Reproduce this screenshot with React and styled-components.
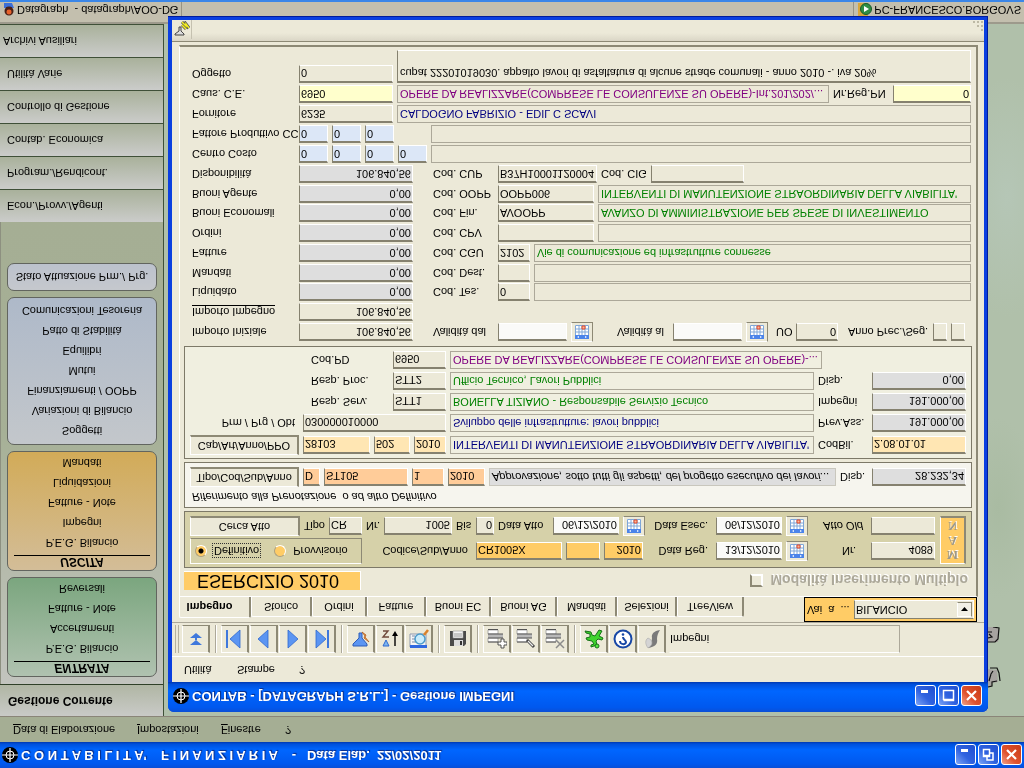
import React from "react";
import styled, { createGlobalStyle, css } from "styled-components";

const GlobalStyle = createGlobalStyle`
  * {
    box-sizing: border-box;
  }
  body {
    margin: 0;
    background: #b1c0aa;
  }
  body, button, input, select, textarea {
    font-family: "Liberation Sans", Arial, sans-serif;
    font-size: 11px;
    line-height: 13px;
    color: #000;
  }
`;

const sideMenus = [
  {
    title: "ENTRATA",
    tone: "green",
    items: ["P.E.G. Bilancio", "Accertamenti", "Fatture - Note", "Reversali"],
  },
  {
    title: "USCITA",
    tone: "orange",
    items: ["P.E.G. Bilancio", "Impegni", "Fatture - Note", "Liquidazioni", "Mandati"],
  },
  {
    tone: "blue",
    items: [
      "Soggetti",
      "Variazioni di Bilancio",
      "Finanziamenti / OOPP",
      "Mutui",
      "Equilibri",
      "Patto di Stabilità",
      "Comunicazioni Tesoreria",
    ],
  },
  { tone: "silver", items: ["Stato Attuazione Prm./ Prg."] },
];

const sideSections = [
  "Econ./Provv./Agenti",
  "Program./Rendicont.",
  "Contab. Economica",
  "Controllo di Gestione",
  "Utilità Varie",
  "Archivi Ausiliari",
];

const tabs = [
  ["Impegno", 72],
  ["Storico", 61],
  ["Ordini", 55],
  ["Fatture", 59],
  ["Buoni EC", 65],
  ["Buoni AG", 66],
  ["Mandati", 60],
  ["Selezioni", 60],
  ["TreeView", 67],
];

export default function App() {
  return (
    <Screen>
      <GlobalStyle />
      <TitleBar>
        <Crosshair />
        <AppTitle>
          {"C O N T A B I L I T A'    F I N A N Z I A R I A    -   Data Elab.  22/02/2011"}
        </AppTitle>
        <WindowButtons restore />
      </TitleBar>
      <MainMenu>
        <MenuItem $w={124}><u>D</u>ata di Elaborazione</MenuItem>
        <MenuItem $w={84}><u>I</u>mpostazioni</MenuItem>
        <MenuItem $w={64}><u>F</u>inestre</MenuItem>
        <MenuItem $w={20}>?</MenuItem>
      </MainMenu>
      <Workspace>
        <Sidebar>
          <SideHeader>Gestione Corrente</SideHeader>
          <SideBody>
            {sideMenus.map((menu) => (
              <SideBox key={menu.tone} $tone={menu.tone} $titled={!!menu.title}>
                {menu.title && <SideTitle>{menu.title}</SideTitle>}
                {menu.items.map((item) => (
                  <SideLink href="#" key={item}>{item}</SideLink>
                ))}
              </SideBox>
            ))}
          </SideBody>
          {sideSections.map((name, i) => (
            <SideSection key={name} $last={i === sideSections.length - 1}>{name}</SideSection>
          ))}
        </Sidebar>
        <Wallpaper>
          <WallpaperLetters />
        </Wallpaper>
      </Workspace>
      <StatusBar>
        <StatusCell>
          <UserIcon />
          {"Datagraph  - datagraph/AOO-DG"}
        </StatusCell>
        <StatusCell $right>
          <ServerIcon />
          PC-FRANCESCO.BORGOVS
        </StatusCell>
      </StatusBar>
      <ImpegniWindow />
    </Screen>
  );
}

function ImpegniWindow() {
  return (
    <Window>
      <WindowTitle>
        <Crosshair />
        <AppTitle>CONTAB - [DATAGRAPH S.R.L.] - Gestione IMPEGNI</AppTitle>
        <WindowButtons />
      </WindowTitle>
      <WindowBody>
        <WindowMenu>
          <MenuItem $w={53}>Utilità</MenuItem>
          <MenuItem $w={62}>Stampe</MenuItem>
          <MenuItem $w={20}>?</MenuItem>
        </WindowMenu>
        <Toolbar />
        <TabStrip>
          {tabs.map(([name, width], i) => (
            <Tab key={name} $w={width} $active={i === 0}>{name}</Tab>
          ))}
          <GoTo>
            <label htmlFor="goto">Vai&nbsp; a&nbsp; ...</label>
            <SelectWrap>
              <GoToSelect id="goto" defaultValue="BILANCIO">
                <option>BILANCIO</option>
              </GoToSelect>
              <SelectArrow viewBox="0 0 13 13">
                <path d="M3 5h7L6.5 9z" fill="#000" />
              </SelectArrow>
            </SelectWrap>
          </GoTo>
        </TabStrip>
        <Page>
          <PageHead>
            <Year>ESERCIZIO 2010</Year>
            <Multiple>
              <CheckBox type="checkbox" disabled />
              Modalità Inserimento Multiplo
            </Multiple>
          </PageHead>
          <ActPanel />
          <BookingPanel />
          <ChapterPanel />
          <Amounts />
        </Page>
        <FootBar>
          <FootButton aria-label="Dati"><FlaskIcon /></FootButton>
          <Grip viewBox="0 0 12 12">
            <path d="M9 1h2v2h-2zM5 5h2v2h-2zM9 5h2v2h-2zM1 9h2v2h-2zM5 9h2v2h-2zM9 9h2v2h-2z" fill="#bdb9a5" />
          </Grip>
        </FootBar>
      </WindowBody>
    </Window>
  );
}

function ActPanel() {
  return (
    <Panel $bg="#d6d1a9">
      <ActGrid>
        <Rows $gap={2}>
          <Row>
            <RadioGroup>
              <RadioLabel $focus>
                <Radio type="radio" name="stato" defaultChecked />
                <span>Definitivo</span>
              </RadioLabel>
              <RadioLabel>
                <Radio type="radio" name="stato" />
                <span>Provvisorio</span>
              </RadioLabel>
            </RadioGroup>
            <Label htmlFor="codice" $w={106} $align="right">Codice/Sub/Anno</Label>
            <Field id="codice" $w={86} $bg="#ffcc66" defaultValue="CR1005X" />
            <Field aria-label="Sub" $w={34} $bg="#ffcc66" />
            <Field aria-label="Anno" $w={39} $bg="#ffcc66" $num defaultValue="2010" />
            <Label htmlFor="dreg" $w={65} $align="right">Data Reg.</Label>
            <Field id="dreg" $w={66} $bg="#fafaf8" $num defaultValue="13/12/2010" />
            <Calendar />
            <Label htmlFor="nr" $w={55} $align="right" $pr={11}>Nr.</Label>
            <Field id="nr" $w={64} $num defaultValue="4089" />
          </Row>
          <Row>
            <PushButton $w={110}>Cerca Atto</PushButton>
            <Label htmlFor="tipo" $w={21}>Tipo</Label>
            <Field id="tipo" $w={33} defaultValue="CR" />
            <Label htmlFor="nratto" $w={14}>Nr.</Label>
            <Field id="nratto" $w={68} $num defaultValue="1005" />
            <Label htmlFor="bis" $w={16}>Bis</Label>
            <Field id="bis" $w={18} $num defaultValue="0" />
            <Label htmlFor="datto" $w={51}>Data Atto</Label>
            <Field id="datto" $w={66} $bg="#fafaf8" $num defaultValue="06/12/2010" />
            <Calendar />
            <Label htmlFor="desec" $w={63} $align="right">Data Esec.</Label>
            <Field id="desec" $w={66} $bg="#fafaf8" $num defaultValue="06/12/2010" />
            <Calendar />
            <Label htmlFor="attoold" $w={55} $align="right" $italic>Atto Old</Label>
            <Field id="attoold" $w={64} />
          </Row>
        </Rows>
        <ManButton disabled>
          <span>M</span>
          <span>A</span>
          <span>N</span>
        </ManButton>
      </ActGrid>
    </Panel>
  );
}

function BookingPanel() {
  return (
    <Panel $bg="#f6f5ee">
      <Note>Riferimento alla Prenotazione&nbsp; o ad altro Definitivo</Note>
      <Row>
        <PushButton $w={109}>Tipo/Cod/Sub/Anno</PushButton>
        <Field aria-label="Tipo" $w={17} $bg="#ffcc99" defaultValue="D" />
        <Field aria-label="Codice" $w={84} $bg="#ffcc99" defaultValue="ST105" />
        <Field aria-label="Sub" $w={32} $bg="#ffcc99" defaultValue="1" />
        <Field aria-label="Anno" $w={37} $bg="#ffcc99" defaultValue="2010" />
        <Descr $bg="#dedede" $italic $soft>
          Approvazione, sotto tutti gli aspetti, del progetto esecutivo dei lavori...
        </Descr>
        <Label htmlFor="disp1" $w={28}>Disp.</Label>
        <Field id="disp1" $w={94} $bg="#dedede" $num defaultValue="28.232,34" />
      </Row>
    </Panel>
  );
}

function ChapterPanel() {
  return (
    <Panel $bg="#f0efe0">
      <Rows $gap={3}>
        <Row>
          <PushButton $w={109}>Cap/Art/Anno/PPO</PushButton>
          <Field aria-label="Capitolo" $w={67} $bg="#ffe6b3" defaultValue="28103" />
          <Field aria-label="Articolo" $w={36} $bg="#ffe6b3" defaultValue="502" />
          <Field aria-label="Anno" $w={32} $bg="#ffe6b3" defaultValue="2010" />
          <Descr $color="#000080">INTERVENTI DI MANUTENZIONE STRAORDINARIA DELLA VIABILITA'</Descr>
          <Label htmlFor="codbil" $w={50}>CodBil.</Label>
          <Field id="codbil" $w={94} $bg="#ffe6b3" defaultValue="2.08.01.01" />
        </Row>
        <Row>
          <Label htmlFor="prm" $w={109} $align="right">Prm / Prg / Obt</Label>
          <Field id="prm" $w={143} defaultValue="030000010000" />
          <Descr $color="#000080">Sviluppo delle infrastrutture: lavori pubblici</Descr>
          <Label htmlFor="prev" $w={50}>Prev.Ass.</Label>
          <Field id="prev" $w={94} $bg="#dedede" $num defaultValue="191.000,00" />
        </Row>
        <Row>
          <Label htmlFor="serv" $w={199} $pl={121}>Resp. Serv.</Label>
          <Field id="serv" $w={53} defaultValue="STT1" />
          <Descr $color="#008000">BONELLA TIZIANO - Responsabile Servizio Tecnico</Descr>
          <Label htmlFor="imp" $w={50}>Impegni</Label>
          <Field id="imp" $w={94} $bg="#dedede" $num defaultValue="191.000,00" />
        </Row>
        <Row>
          <Label htmlFor="proc" $w={199} $pl={121}>Resp. Proc.</Label>
          <Field id="proc" $w={53} defaultValue="STT2" />
          <Descr $color="#008000">Ufficio Tecnico, Lavori Pubblici</Descr>
          <Label htmlFor="disp2" $w={50}>Disp.</Label>
          <Field id="disp2" $w={94} $bg="#dedede" $num defaultValue="0,00" />
        </Row>
        <Row>
          <Label htmlFor="pd" $w={199} $pl={121}>Cod.PD</Label>
          <Field id="pd" $w={53} defaultValue="6950" />
          <Descr $color="#800080">OPERE DA REALIZZARE(COMPRESE LE CONSULENZE SU OPERE)-...</Descr>
          <Blank $w={140} />
        </Row>
      </Rows>
    </Panel>
  );
}

function Amount({ label, value, plain, underline, children }) {
  const id = "imp-" + label.replace(/\s/g, "");
  return (
    <Row $h={17}>
      <Label htmlFor={id} $w={103}>
        {underline ? <Underlined>{label}</Underlined> : label}
      </Label>
      <Field id={id} $w={114} $bg={plain ? undefined : "#dedede"} $num defaultValue={value} />
      {children}
    </Row>
  );
}

function Code({ label, value, width, descr }) {
  const id = "cod-" + label;
  return (
    <>
      <Label htmlFor={id} $w={77} $pl={16}>{label}</Label>
      <Field id={id} $w={width} defaultValue={value} />
      {descr !== undefined && <Descr $color="#008000">{descr}</Descr>}
    </>
  );
}

function Amounts() {
  return (
    <AmountArea>
      <Rows $gap={3}>
        <Amount label="Importo Iniziale" value="106.840,56" plain>
          <Label htmlFor="valdal" $w={77} $pl={16}>Validità dal</Label>
          <Field id="valdal" $w={69} $bg="#fafaf8" />
          <Calendar />
          <Label htmlFor="valal" $w={72} $pl={20}>Validità al</Label>
          <Field id="valal" $w={69} $bg="#fafaf8" />
          <Calendar />
          <Label htmlFor="uo" $w={20} $pl={4}>UO</Label>
          <Field id="uo" $w={42} $num defaultValue="0" />
          <Label htmlFor="prec" $w={87} $pl={6}>Anno Prec./Seg.</Label>
          <Field id="prec" $w={14} />
          <Field aria-label="Anno seguente" $w={14} />
        </Amount>
        <Amount label="Importo Impegno" value="106.840,56" plain underline />
        <Amount label="Liquidato" value="0,00">
          <Code label="Cod. Tes." value="0" width={32} descr="" />
        </Amount>
      </Rows>
      <Rows $gap={3}>
        <Amount label="Mandati" value="0,00">
          <Code label="Cod. Dest." value="" width={32} descr="" />
        </Amount>
        <Amount label="Fatture" value="0,00">
          <Code
            label="Cod. CGU"
            value="2102"
            width={32}
            descr="Vie di comunicazione ed infrastrutture connesse"
          />
        </Amount>
        <Amount label="Ordini" value="0,00">
          <Code label="Cod. CPV" value="" width={96} descr="" />
        </Amount>
        <Amount label="Buoni Economali" value="0,00">
          <Code
            label="Cod. Fin."
            value="AVOOPP"
            width={96}
            descr="AVANZO DI AMMINISTRAZIONE PER SPESE DI INVESTIMENTO"
          />
        </Amount>
      </Rows>
      <Rows $gap={3}>
        <Amount label="Buoni Agente" value="0,00">
          <Code
            label="Cod. OOPP"
            value="OOPP006"
            width={96}
            descr="INTERVENTI DI MANUTENZIONE STRAORDINARIA DELLA VIABILITA'"
          />
        </Amount>
        <Amount label="Disponibilità" value="106.840,56">
          <Code label="Cod. CUP" value="B37H10001120004" width={99} />
          <Label htmlFor="cig" $w={46}>Cod. CIG</Label>
          <Field id="cig" $w={93} />
        </Amount>
        <Row $h={17}>
          <Label htmlFor="cc0" $w={103}>Centro Costo</Label>
          {[0, 1, 2, 3].map((n) => (
            <Field key={n} id={"cc" + n} aria-label="Centro Costo" $w={29} $bg="#dce7f7" defaultValue="0" />
          ))}
          <Descr />
        </Row>
        <Row $h={17}>
          <Label htmlFor="fp0" $w={103}>Fattore Produttivo CC</Label>
          {[0, 1, 2].map((n) => (
            <Field key={n} id={"fp" + n} aria-label="Fattore Produttivo" $w={29} $bg="#dce7f7" defaultValue="0" />
          ))}
          <Blank $w={29} />
          <Descr />
        </Row>
        <Row $h={17}>
          <Label htmlFor="forn" $w={103}>Fornitore</Label>
          <Field id="forn" $w={94} defaultValue="6235" />
          <Descr $color="#000080">CALDOGNO FABRIZIO - EDIL C SCAVI</Descr>
        </Row>
        <Row $h={17}>
          <Label htmlFor="caus" $w={103}>Caus. C.E.</Label>
          <Field id="caus" $w={94} $bg="#ffffcc" defaultValue="6950" />
          <Descr $color="#800080">
            OPERE DA REALIZZARE(COMPRESE LE CONSULENZE SU OPERE)-Int.201/202/...
          </Descr>
          <Label htmlFor="regpn" $w={56}>Nr.Reg.PN</Label>
          <Field id="regpn" $w={78} $bg="#ffffcc" $num defaultValue="0" />
        </Row>
        <Row $h={33} $top>
          <Label htmlFor="ogg" $w={103}>Oggetto</Label>
          <Field id="ogg" $w={94} defaultValue="0" />
          <Subject
            aria-label="Testo oggetto"
            defaultValue="cupat 22201019030. appalto lavori di asfaltatura di alcune strade comunali - anno 2010 -. iva 20%"
          />
        </Row>
      </Rows>
    </AmountArea>
  );
}

function Toolbar() {
  return (
    <Tools>
      <Handle />
      <ToolGroup>
        <ToolButton aria-label="Espandi">
          <Svg>
            <path d="M10 9L16 4H4zM10 16L16 11H4z" fill="#3f78dc" />
            <path d="M9 9h2v3h-2z" fill="#3f78dc" />
          </Svg>
        </ToolButton>
      </ToolGroup>
      <Separator />
      <ToolGroup>
        <ToolButton aria-label="Primo">
          <Svg><path d="M2 1v18" stroke="#3f78dc" strokeWidth="2" /><path d="M15 1v18L5 10z" fill="#5b95f2" stroke="#2f68cf" strokeWidth=".8" /></Svg>
        </ToolButton>
        <ToolButton aria-label="Precedente">
          <Svg><path d="M14 1v18L4 10z" fill="#5b95f2" stroke="#2f68cf" strokeWidth=".8" /></Svg>
        </ToolButton>
        <ToolButton aria-label="Successivo">
          <Svg><path d="M5 1v18L15 10z" fill="#5b95f2" stroke="#2f68cf" strokeWidth=".8" /></Svg>
        </ToolButton>
        <ToolButton aria-label="Ultimo">
          <Svg><path d="M4 1v18L14 10z" fill="#5b95f2" stroke="#2f68cf" strokeWidth=".8" /><path d="M16 1v18" stroke="#3f78dc" strokeWidth="2" /></Svg>
        </ToolButton>
      </ToolGroup>
      <Separator />
      <ToolGroup>
        <ToolButton aria-label="Filtro">
          <Svg>
            <path d="M2 3h14v2l-5 6v5H8v-5L2 5z" fill="#5b95f2" stroke="#2d5cb8" />
            <path d="M11 17l4-3-1-2 4-5-5 4 1 2z" fill="#f6a845" stroke="#b05a1d" strokeWidth=".8" />
          </Svg>
        </ToolButton>
        <ToolButton aria-label="Ordina">
          <Svg>
            <path d="M3 3h6L6 9z" fill="#7cb6f0" stroke="#2f68cf" />
            <path d="M3 18h5l-5-6h6" stroke="#704a3a" strokeWidth="1.4" />
            <path d="M15 3v11" stroke="#000" strokeWidth="1.4" />
            <path d="M12 13h6l-3 5z" fill="#000" />
          </Svg>
        </ToolButton>
        <ToolButton aria-label="Cerca">
          <Svg>
            <path d="M1 2h16v13H1z" fill="#f5f5f5" stroke="#8e99ad" />
            <path d="M1 1h17v3H1z" fill="#2f68e0" />
            <path d="M3 7h4M3 10h3M3 13h3" stroke="#7d8ba8" />
            <circle cx="11" cy="10" r="5" fill="#c9ecfb" stroke="#4b9ac9" strokeWidth="1.5" />
            <path d="M15 14l4 5" stroke="#d9822b" strokeWidth="2.5" />
          </Svg>
        </ToolButton>
      </ToolGroup>
      <Separator />
      <ToolGroup>
        <ToolButton aria-label="Salva">
          <Svg>
            <path d="M2 3h14l2 2v13H2z" fill="#4a4a4a" />
            <path d="M6 3h9v6H6z" fill="#dcdcdc" />
            <path d="M12 4h2v4h-2z" fill="#333" />
            <path d="M5 11h10v7H5z" fill="#f4f4f4" stroke="#999" strokeWidth=".6" />
            <path d="M6 13h8M6 15h8" stroke="#999" />
          </Svg>
        </ToolButton>
      </ToolGroup>
      <Separator />
      <ToolGroup>
        <ToolButton aria-label="Aggiungi riga">
          <Svg><RowsGlyph /><path d="M14 1h3v3h3v3h-3v3h-3V7h-3V4h3z" fill="#fff" stroke="#444" strokeWidth=".9" /></Svg>
        </ToolButton>
        <ToolButton aria-label="Modifica riga">
          <Svg><RowsGlyph /><path d="M11 9l7-7" stroke="#444" strokeWidth="3" /><path d="M12 8l5-5" stroke="#eee" strokeWidth="1.2" /></Svg>
        </ToolButton>
        <ToolButton aria-label="Elimina riga">
          <Svg><RowsGlyph /><path d="M11 1l8 8M11 9l8-8" stroke="#8b8b8b" strokeWidth="1.5" /></Svg>
        </ToolButton>
      </ToolGroup>
      <Separator />
      <ToolGroup>
        <ToolButton aria-label="Collegamenti">
          <Svg>
            <path
              d="M7 2l6 2-1 4 2 2 4-1 1 2-4 2 3 5-3 1-4-6-3 1-1 3-6 1 1-2 4-1 0-3-4-1 1-2 5-1 2-3-3-1z"
              fill="#3fd52f"
              stroke="#18701a"
            />
            <circle cx="13" cy="3" r="2" fill="#54ea3d" stroke="#18701a" />
          </Svg>
        </ToolButton>
        <ToolButton aria-label="Guida">
          <Svg>
            <circle cx="10" cy="10" r="8.5" fill="#fff" stroke="#1747a6" strokeWidth="2" />
            <path d="M7 8c0-4 6-4 6-1 0 2-3 2-3 5" stroke="#1747a6" strokeWidth="2" />
            <circle cx="10" cy="14.5" r="1.3" fill="#1747a6" />
          </Svg>
        </ToolButton>
        <ToolButton aria-label="Esci">
          <Svg>
            <path d="M6 1c7 1 10 4 9 9 0 3 1 6 3 9-6-1-9-4-8-8 0-3-1-5-4-5z" fill="#7a7a7a" />
            <path d="M6 1c-3 4-3 8 0 10 2-1 4-2 4-5 0-2-2-4-4-5z" fill="#d4d4d4" stroke="#aaa" strokeWidth=".6" />
          </Svg>
        </ToolButton>
      </ToolGroup>
      <ToolCaption>Impegni</ToolCaption>
    </Tools>
  );
}

const Svg = ({ children }) => (
  <svg width="20" height="20" viewBox="0 0 20 20" fill="none">
    {children}
  </svg>
);

const RowsGlyph = () => (
  <g>
    <path d="M1 15h10v4H1zM1 7h10v4H1z" fill="#fff" stroke="#9a9a9a" strokeWidth=".8" />
    <path d="M1 11h15v4H1z" fill="#b9b9b9" />
    <path d="M1 19.5h10M1 15h15M1 11h15M1 7h10" stroke="#555" />
  </g>
);

const Crosshair = () => (
  <svg width="17" height="17" viewBox="0 0 17 17">
    <circle cx="8" cy="8" r="8" fill="#000" />
    <circle cx="8" cy="8" r="4" fill="none" stroke="#fff" />
    <path d="M0 8h16M8 1v14" stroke="#fff" strokeWidth="1.2" />
  </svg>
);

const FlaskIcon = () => (
  <svg width="16" height="16" viewBox="0 0 16 16">
    <path d="M1 2h9v1L7 6v4H5V6L1 3z" fill="#ddd" stroke="#444" />
    <path d="M8 15l4-4 0 2 3-4M8 12l4-4" stroke="#555" strokeWidth="3" fill="none" />
    <path d="M8 15l4-4 0 2 3-4M8 12l4-4" stroke="#f5ef20" strokeWidth="1.5" fill="none" />
  </svg>
);

const UserIcon = () => (
  <svg width="12" height="14" viewBox="0 0 12 14">
    <path d="M1 14V9h10l-2 5z" fill="#3d6fd6" />
    <circle cx="6" cy="6" r="4.5" fill="#4a2016" />
    <circle cx="6" cy="5" r="2.5" fill="#e8622c" />
  </svg>
);

const ServerIcon = () => (
  <svg width="15" height="15" viewBox="0 0 15 15">
    <path d="M1 1h10v13H1z" fill="#d7a63c" />
    <circle cx="9" cy="8" r="5.5" fill="#2f8e45" stroke="#1b5c2b" />
    <path d="M7 5v6l5-3z" fill="#fff" />
  </svg>
);

const WallpaperLetters = () => (
  <Letters viewBox="0 0 16 64">
    <path d="M0 4h4l1 4 6 1-1 12-10 1z" fill="#a7a3a0" />
    <path d="M1 4l4 1v4l5 1M13 10l-1 8-2 5-7 0M2 10l2 7 2 3" fill="none" stroke="#111" strokeWidth="1.2" />
    <path d="M0 49h11l1 12-3 3H0z" fill="#a7a3a0" />
    <path d="M1 49l7 0 3 3 1 11-6 1M1 53l4 1-3 3M1 59l4 0" fill="none" stroke="#111" strokeWidth="1.2" />
  </Letters>
);

function Calendar() {
  return (
    <CalButton aria-label="Calendario">
      <svg width="14" height="14" viewBox="0 0 14 14">
        <path d="M0 0h14v14H0z" fill="#fff" />
        <path d="M0 0h14v4H0z" fill="#4b84ea" />
        <path d="M4 1v2l-2-1zM10 1v2l2-1z" fill="#fff" />
        <path d="M.5 4v9.5h13V4M4 4v10M7 4v10M10 4v10M0 7h14M0 10h14" fill="none" stroke="#7fa6d8" />
        <path d="M7 10h3v3H7z" fill="#f8b79a" stroke="#e0482a" />
      </svg>
    </CalButton>
  );
}

function WindowButtons({ restore }) {
  return (
    <Buttons>
      <CaptionButton aria-label="Riduci a icona">
        <svg width="17" height="17" viewBox="0 0 17 17"><path d="M4 11h7v3H4z" fill="#fff" /></svg>
      </CaptionButton>
      <CaptionButton aria-label="Ingrandisci">
        <svg width="17" height="17" viewBox="0 0 17 17" fill="none" stroke="#fff" strokeWidth="1.5">
          {restore ? (
            <path d="M7 6V3h6v7h-3M3.5 6.5h6v7h-6zM3 7.5h7" />
          ) : (
            <path d="M3.5 4v9.5h10V3.5h-10M3 4.5h11" />
          )}
        </svg>
      </CaptionButton>
      <CaptionButton $close aria-label="Chiudi">
        <svg width="17" height="17" viewBox="0 0 17 17"><path d="M4 4l9 9M13 4l-9 9" stroke="#fff" strokeWidth="2.2" /></svg>
      </CaptionButton>
    </Buttons>
  );
}

const sunken = css`
  border: 1px solid;
  border-color: #85816f #fff #fff #85816f;
`;

const raised = css`
  border: 1px solid;
  border-color: #fff #8d8975 #8d8975 #fff;
`;

const raisedThick = css`
  border: solid;
  border-width: 1px 2px 2px 1px;
  border-color: #fff #8d8975 #8d8975 #fff;
`;

/* the whole desktop is mirrored top to bottom */
const Screen = styled.div`
  position: relative;
  display: flex;
  flex-direction: column;
  min-height: 100vh;
  overflow: hidden;
  transform: scaleY(-1);
`;

const TitleBar = styled.header`
  display: flex;
  align-items: center;
  height: 26px;
  padding: 0 2px;
  color: #fff;
  background: linear-gradient(#0a4fd6, #0058ee 15%, #0066ff 70%, #0050dc 92%, #0038b0);
`;

const AppTitle = styled.h1`
  flex: 1;
  margin: 0 0 0 2px;
  font-size: 13px;
  line-height: 16px;
  white-space: pre;
  overflow: hidden;
  text-shadow: 1px 1px 1px #0a2a80;
`;

const Buttons = styled.div`
  display: flex;
  gap: 2px;
`;

const CaptionButton = styled.button`
  display: grid;
  place-items: center;
  width: 21px;
  height: 21px;
  padding: 0;
  border: 1px solid #fff;
  border-radius: 3px;
  background: ${(p) =>
    p.$close
      ? "linear-gradient(135deg, #f0a088, #e0532f 40%, #c93a16)"
      : "linear-gradient(135deg, #7da4f5, #2f62e0 45%, #1f4fd0)"};
`;

const MainMenu = styled.nav`
  display: flex;
  align-items: center;
  height: 26px;
  padding-left: 13px;
  background: #a5ae94;
  border-bottom: 1px solid #8a8578;
`;

const MenuItem = styled.span`
  width: ${(p) => p.$w}px;
`;

const Workspace = styled.div`
  display: flex;
  flex: 1;
`;

const Sidebar = styled.aside`
  display: flex;
  flex-direction: column;
  width: 164px;
  border-right: 1px solid #3f5038;
`;

const SideHeader = styled.h2`
  display: flex;
  align-items: center;
  height: 32px;
  margin: 0;
  padding-left: 8px;
  font-size: 12px;
  background: linear-gradient(#c9cac7, #b0b6a4);
  border-bottom: 1px solid #2f4028;
`;

const SideBody = styled.div`
  display: flex;
  flex: 1;
  flex-direction: column;
  gap: 6px;
  padding: 7px 6px;
  border-left: 1px solid #8d9080;
  background: linear-gradient(#c2c4be, #a6b096 55%, #a5ae94);
`;

const tones = {
  green: "#b0c2b0, #7ba67f",
  orange: "#d3bd98, #d2ab58",
  blue: "#c3c7cb, #aeb9c9",
  silver: "#c5c8cd, #bcc2cd",
};

const SideBox = styled.nav`
  display: flex;
  flex-direction: column;
  align-items: center;
  padding: 3px 6px ${(p) => (p.$titled ? 1 : 3)}px;
  border: 1px solid #62655f;
  border-radius: 7px;
  background: linear-gradient(${(p) => tones[p.$tone]});
`;

const SideTitle = styled.h3`
  width: 100%;
  height: 12px;
  margin: 0 0 2px;
  font-size: 12px;
  font-style: italic;
  line-height: 10px;
  text-align: center;
  border-bottom: 1px solid #000;
`;

const SideLink = styled.a`
  color: #000;
  line-height: 20px;
  text-decoration: none;
`;

const SideSection = styled.button`
  height: 33px;
  padding: 0 0 0 ${(p) => (p.$last ? 3 : 7)}px;
  text-align: left;
  border: 0;
  border-bottom: 1px solid #3f5038;
  background: linear-gradient(#cbccca, #a9b19b);
`;

const Wallpaper = styled.div`
  display: flex;
  flex: 1;
  justify-content: flex-end;
  align-items: flex-start;
  padding: 25px 21px 0 0;
  background:
    radial-gradient(ellipse 40px 90px at 97% 30%, #a9bba2, transparent),
    radial-gradient(ellipse 50px 120px at 98% 75%, #b5c6b6, transparent),
    #b0c0aa;
`;

const Letters = styled.svg`
  width: 16px;
  height: 64px;
`;

const StatusBar = styled.footer`
  display: flex;
  justify-content: space-between;
  height: 24px;
  padding: 4px 0 0;
  background: #c3bfae;
  border-top: 2px solid #9d9a8c;
  border-bottom: 2px solid #3a86e8;
`;

const StatusCell = styled.div`
  display: flex;
  align-items: center;
  gap: 2px;
  padding: 0 3px;
  white-space: pre;
  border: 0 solid #979383;
  border-width: ${(p) => (p.$right ? "0 0 0 1px" : "0 1px 0 0")};
  svg {
    flex: none;
  }
`;

const Window = styled.section`
  position: absolute;
  top: 56px;
  left: 168px;
  right: 36px;
  padding: 0 4px 4px;
  border-radius: 6px 6px 0 0;
  background: #0a3fe0;
  box-shadow: inset -1px -1px 0 #001c9c;
`;

const WindowTitle = styled(TitleBar)`
  height: 30px;
  margin: 0 -4px;
  padding: 2px 6px 0 5px;
  border-radius: 6px 6px 0 0;
`;

const WindowBody = styled.div`
  background: #ece9d8;
`;

const WindowMenu = styled.nav`
  display: flex;
  align-items: center;
  height: 26px;
  padding-left: 12px;
  border-bottom: 1px solid #fff;
`;

const Tools = styled.div`
  display: flex;
  align-items: center;
  height: 34px;
  padding-left: 3px;
  border-bottom: 1px solid #aca899;
`;

const Handle = styled.span`
  width: 4px;
  height: 28px;
  margin-right: 3px;
  border: solid #b5b19f;
  border-width: 0 1px;
`;

const Separator = styled.span`
  width: 11px;
  height: 28px;
  background: linear-gradient(90deg, transparent 5px, #aca899 5px, #aca899 6px, #fff 6px, #fff 7px, transparent 7px);
`;

const ToolGroup = styled.div`
  display: flex;
  gap: 1px;
`;

const ToolButton = styled.button`
  display: grid;
  place-items: center;
  width: 28px;
  height: 28px;
  padding: 0;
  background: #ece9d8;
  border: solid;
  border-width: 1px 2px 1px 1px;
  border-color: #fff #8d8975 #8d8975 #fff;
`;

const ToolCaption = styled.div`
  flex: 1;
  height: 28px;
  margin: 0 84px 0 3px;
  padding: 7px 0;
  border: 1px solid;
  border-color: #fff #aca899 #aca899 #ece9d8;
`;

const TabStrip = styled.div`
  display: flex;
  align-items: flex-end;
  height: 25px;
  padding: 0 7px;
`;

const Tab = styled.button`
  width: ${(p) => p.$w}px;
  height: 20px;
  padding: 0;
  background: #ece9d8;
  border: solid;
  border-width: 1px 2px 0 1px;
  border-color: #fff #8d8975 #fff #fff;
  border-radius: 2px 2px 0 0;
  ${(p) => p.$active && "height: 21px; padding-right: 10px; font-weight: bold;"}
`;

const GoTo = styled.div`
  display: flex;
  align-items: center;
  justify-content: space-between;
  width: 173px;
  height: 25px;
  margin-left: auto;
  padding: 0 2px;
  border: 1px solid #000;
  background: #ffcc66;
`;

const SelectWrap = styled.div`
  position: relative;
  width: 120px;
`;

const GoToSelect = styled.select`
  display: block;
  width: 100%;
  height: 19px;
  padding: 0 1px;
  appearance: none;
  border-radius: 0;
  background: #ece9d8;
  ${sunken}
`;

const SelectArrow = styled.svg`
  position: absolute;
  top: 2px;
  right: 2px;
  width: 15px;
  height: 15px;
  pointer-events: none;
  background: #f2f0e6;
  ${raised}
`;

const Page = styled.div`
  display: flex;
  flex-direction: column;
  gap: 3px;
  margin: 0 6px 0 7px;
  padding: 6px 4px 3px;
  border: solid;
  border-width: 1px 2px 2px 1px;
  border-color: #fff #8d8975 #8d8975 #fff;
`;

const PageHead = styled.div`
  display: flex;
  justify-content: space-between;
  align-items: center;
  height: 19px;
`;

const Year = styled.div`
  width: 177px;
  padding-left: 13px;
  font-size: 18px;
  line-height: 18px;
  background: #ffcc66;
  border: solid #fff;
  border-width: 0 1px 1px 0;
`;

const Multiple = styled.label`
  display: flex;
  align-items: center;
  gap: 7px;
  padding-right: 4px;
  font-size: 14px;
  line-height: 16px;
  font-weight: bold;
  color: #aca899;
  text-shadow: 1px 1px 0 #fff;
`;

const CheckBox = styled.input`
  width: 13px;
  height: 13px;
  margin: 0;
  appearance: none;
  border: 2px solid;
  border-color: #8d8975 #fff #fff #8d8975;
`;

const Panel = styled.section`
  padding: 3px 5px 4px;
  background: ${(p) => p.$bg};
  border: 1px solid #7d7968;
`;

const ActGrid = styled.div`
  display: flex;
  justify-content: space-between;
  gap: 6px;
`;

const Rows = styled.div`
  display: grid;
  grid-template-columns: minmax(0, 1fr);
  flex: 1;
  gap: ${(p) => p.$gap}px;
`;

const Row = styled.div`
  display: flex;
  align-items: ${(p) => (p.$top ? "flex-start" : "center")};
  gap: 4px;
  height: ${(p) => (p.$h ? p.$h + "px" : "auto")};
`;

const Label = styled.label`
  flex: none;
  width: ${(p) => p.$w}px;
  padding-left: ${(p) => p.$pl || 0}px;
  padding-right: ${(p) => (p.$align ? p.$pr || 4 : 0)}px;
  text-align: ${(p) => p.$align || "left"};
  font-style: ${(p) => (p.$italic ? "italic" : "normal")};
  line-height: 18px;
  white-space: nowrap;
`;

const Underlined = styled.span`
  border-bottom: 1px solid #000;
`;

const Field = styled.input`
  flex: none;
  width: ${(p) => p.$w}px;
  height: 18px;
  padding: 0 1px;
  border-radius: 0;
  background: ${(p) => p.$bg || "#ece9d8"};
  text-align: ${(p) => (p.$num ? "right" : "left")};
  ${sunken}
  border-top-width: 2px;
`;

const Descr = styled.div`
  flex: 1;
  min-width: 0;
  height: 18px;
  padding: 2px 1px 0 2px;
  overflow: hidden;
  white-space: nowrap;
  color: ${(p) => p.$color || "#000"};
  background: ${(p) => p.$bg || "transparent"};
  font-style: ${(p) => (p.$italic ? "italic" : "normal")};
  border: 1px solid ${(p) => (p.$soft ? "#c9c7bd" : "#aca899")};
`;

const Blank = styled.span`
  flex: none;
  width: ${(p) => p.$w}px;
`;

const PushButton = styled.button`
  flex: none;
  width: ${(p) => p.$w}px;
  height: 20px;
  padding: 0;
  background: #ece9d8;
  ${raisedThick}
`;

const CalButton = styled.button`
  flex: none;
  display: grid;
  place-items: center;
  width: 22px;
  height: 20px;
  padding: 0;
  background: #ece9d8;
  border: 1px solid;
  border-color: #fff #8d8975 #8d8975 #fff;
`;

const RadioGroup = styled.div`
  display: flex;
  align-items: center;
  flex: none;
  width: 172px;
  height: 26px;
  gap: 14px;
  padding-left: 4px;
  ${raised}
`;

const RadioLabel = styled.label`
  display: flex;
  align-items: center;
  gap: 6px;
  span {
    padding: 0 1px;
    outline: ${(p) => (p.$focus ? "1px dotted #333" : "none")};
  }
`;

const Radio = styled.input`
  width: 12px;
  height: 12px;
  margin: 0;
  appearance: none;
  border: 1px solid;
  border-color: #aca080 #fff #fff #aca080;
  border-radius: 50%;
  background: #ffcc66;
  &:checked {
    background: radial-gradient(circle, #000 2px, #ffcc66 3px);
  }
`;

const ManButton = styled.button`
  display: flex;
  flex-direction: column;
  justify-content: space-evenly;
  align-items: center;
  width: 26px;
  padding: 0;
  font-family: "Liberation Serif", serif;
  font-size: 12px;
  font-weight: bold;
  color: #9c988a;
  text-shadow: 1px 1px 0 #fff;
  background: #ffcc66;
  ${raisedThick}
`;

const Note = styled.div`
  padding: 1px 2px 3px;
  font-style: italic;
`;

const AmountArea = styled.div`
  display: grid;
  grid-template-columns: minmax(0, 1fr);
  gap: 2px;
  padding: 2px 1px 0 8px;
`;

const Subject = styled.textarea`
  flex: 1;
  min-width: 0;
  height: 33px;
  padding: 2px;
  resize: none;
  overflow: hidden;
  background: #ece9d8;
  border-radius: 0;
  ${sunken}
  border-top-width: 2px;
`;

const FootBar = styled.div`
  display: flex;
  align-items: flex-end;
  justify-content: space-between;
  height: 22px;
  margin-top: 3px;
  background: linear-gradient(#dad6c6, #ece9d8 8px);
  border-top: 1px solid #8d8975;
`;

const FootButton = styled.button`
  display: grid;
  place-items: center;
  width: 20px;
  height: 19px;
  padding: 0;
  background: transparent;
  border: 0;
  border-right: 1px solid #c5c1b0;
`;

const Grip = styled.svg`
  width: 12px;
  height: 12px;
`;
